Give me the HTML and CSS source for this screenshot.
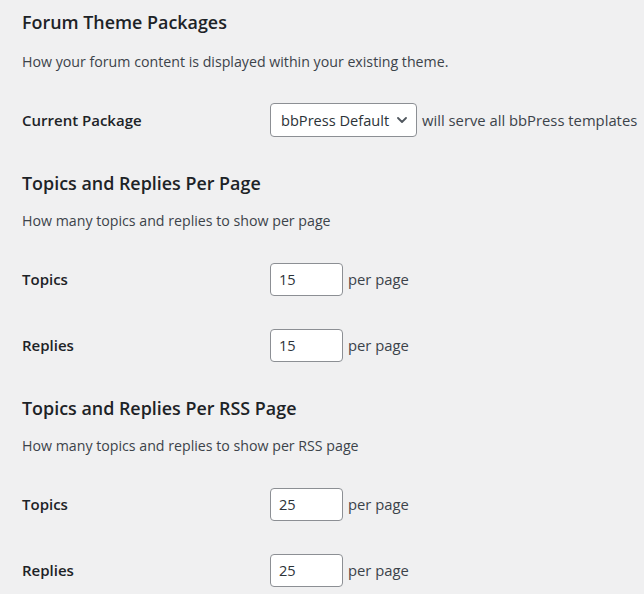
FILE: index.html
```html
<!DOCTYPE html>
<html>
<head>
<meta charset="utf-8">
<link rel="stylesheet" href="styles.css">
</head>
<body>
<div class="wrap">
  <section class="section first">
    <h2 class="title">Forum Theme Packages</h2>
    <p class="desc">How your forum content is displayed within your existing theme.</p>
    <div class="row">
      <div class="label">Current Package</div>
      <div class="field">
        <div class="select">
          <span>bbPress Default</span>
          <svg class="chev" width="10" height="6" viewBox="0 0 10 6"><path d="M1 1 L5 5 L9 1" fill="none" stroke="#50575e" stroke-width="1.8" stroke-linecap="round" stroke-linejoin="round"/></svg>
        </div>
        <span class="after">will serve all bbPress templates</span>
      </div>
    </div>
  </section>

  <section class="section">
    <h2 class="title">Topics and Replies Per Page</h2>
    <p class="desc">How many topics and replies to show per page</p>
    <div class="row">
      <div class="label">Topics</div>
      <div class="field"><div class="num">15</div><span class="after">per page</span></div>
    </div>
    <div class="row">
      <div class="label">Replies</div>
      <div class="field"><div class="num">15</div><span class="after">per page</span></div>
    </div>
  </section>

  <section class="section">
    <h2 class="title">Topics and Replies Per RSS Page</h2>
    <p class="desc">How many topics and replies to show per RSS page</p>
    <div class="row">
      <div class="label">Topics</div>
      <div class="field"><div class="num">25</div><span class="after">per page</span></div>
    </div>
    <div class="row">
      <div class="label">Replies</div>
      <div class="field"><div class="num">25</div><span class="after">per page</span></div>
    </div>
  </section>
</div>
</body>
</html>
```

FILE: styles.css
```css
html, body {
  margin: 0;
  padding: 0;
  background: #f0f0f1;
}
body {
  font-family: "Open Sans", "Noto Sans", sans-serif;
  color: #1d2327;
  width: 644px;
  height: 594px;
  overflow: hidden;
}
.wrap {
  padding: 10px 0 0 22px;
}
.section {
  display: flex;
  flex-direction: column;
}
.section + .section {
  margin-top: 18px;
}
.title {
  margin: 0;
  font-size: 17.9px;
  font-weight: 600;
  line-height: 24px;
  height: 24px;
}
.desc {
  margin: 16px 0 15px;
  font-size: 14.2px;
  line-height: 20px;
  color: #3c434a;
}
.first .desc {
  margin-top: 18px;
}
.row {
  display: flex;
  align-items: center;
  height: 66px;
}
.label {
  width: 248px;
  flex: none;
  font-size: 15px;
  font-weight: 600;
}
.field {
  display: flex;
  align-items: center;
  gap: 5px;
  font-size: 14.8px;
  color: #3c434a;
}
.select {
  box-sizing: border-box;
  width: 147px;
  height: 34px;
  border: 1px solid #8c8f94;
  border-radius: 4px;
  background: #fff;
  display: flex;
  align-items: center;
  justify-content: space-between;
  padding: 0 9px 0 10px;
  color: #2c3338;
  font-size: 14.6px;
}
.chev {
  display: block;
}
.num {
  box-sizing: border-box;
  width: 73px;
  height: 33px;
  border: 1px solid #8c8f94;
  border-radius: 4px;
  background: #fff;
  display: flex;
  align-items: center;
  padding-left: 8px;
  color: #2c3338;
  font-size: 14.6px;
}
.after {
  white-space: nowrap;
}
```
